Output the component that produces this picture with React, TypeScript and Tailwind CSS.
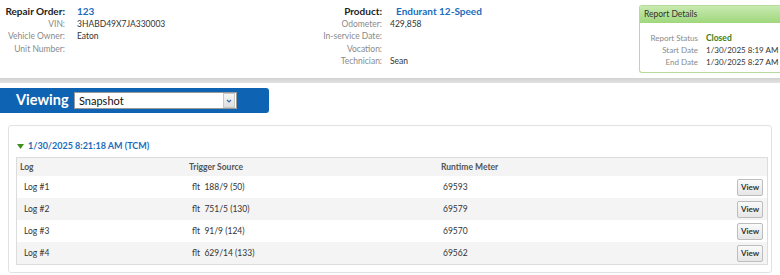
import { ReactNode } from "react";

// 一覧データ
const logs = [
  { log: "Log #1", trigger: "188/9 (50)", meter: "69593" },
  { log: "Log #2", trigger: "751/5 (130)", meter: "69579" },
  { log: "Log #3", trigger: "91/9 (124)", meter: "69570" },
  { log: "Log #4", trigger: "629/14 (133)", meter: "69562" },
];

const Label = ({ children }: { children?: ReactNode }) => (
  <div className="flex justify-end whitespace-nowrap text-[#8a8a8a]">
    <span>{children}</span>
  </div>
);

const Value = ({ children }: { children?: ReactNode }) => (
  <div className="whitespace-nowrap text-[#333]">{children}</div>
);

const App = () => {
  return (
    <div
      className="w-[780px] h-[275px] overflow-hidden bg-white text-[8.5px] leading-[12.5px]"
      style={{ fontFamily: 'Lato, "Open Sans", sans-serif' }}
    >
      {/* ヘッダー */}
      <div className="flex h-[78px]">
        {/* 左ブロック */}
        <div className="grid grid-cols-[54px_auto] gap-x-[12px] pl-[11px] pt-[5px] w-[300px] content-start">
          <div className="flex justify-end whitespace-nowrap text-[10px] font-bold text-[#222]">
            <span>Repair Order:</span>
          </div>
          <div className="text-[10px] font-bold text-[#1c6cbb]">123</div>
          <Label>VIN:</Label>
          <Value>3HABD49X7JA330003</Value>
          <Label>Vehicle Owner:</Label>
          <Value>Eaton</Value>
          <Label>Unit Number:</Label>
          <Value></Value>
        </div>
        {/* 中ブロック */}
        <div className="grid grid-cols-[82px_auto] gap-x-[8px] pt-[5px] w-[339px] content-start">
          <div className="flex justify-end whitespace-nowrap text-[10px] font-bold text-[#222]">
            <span>Product:</span>
          </div>
          <div className="pl-[6px] whitespace-nowrap text-[10px] font-bold text-[#1c6cbb]">Endurant 12-Speed</div>
          <Label>Odometer:</Label>
          <Value>429,858</Value>
          <Label>In-service Date:</Label>
          <Value></Value>
          <Label>Vocation:</Label>
          <Value></Value>
          <Label>Technician:</Label>
          <Value>Sean</Value>
        </div>
        {/* レポート詳細 */}
        <div className="flex-1 mt-[5px] h-[68px] border border-r-0 border-[#b5dc9c] rounded-l-[3px] overflow-hidden">
          <div className="h-[17px] flex items-center pl-[4px] bg-gradient-to-b from-[#c8eab0] to-[#9fd77c] text-[8.5px] text-[#333]">
            Report Details
          </div>
          <div className="grid grid-cols-[58px_auto] gap-x-[8px] pt-[9px] leading-[12px] text-[8px]">
            <Label>Report Status</Label>
            <div className="font-bold text-[8.5px] text-[#3c7d12]">Closed</div>
            <Label>Start Date</Label>
            <Value>1/30/2025 8:19 AM</Value>
            <Label>End Date</Label>
            <Value>1/30/2025 8:27 AM</Value>
          </div>
        </div>
      </div>

      {/* 区切り */}
      <div className="h-[5px] bg-gradient-to-b from-[#d2d2d2] to-[#e2e2e2]" />

      {/* 表示切替バー */}
      <div className="mt-[5px] h-[25px] w-[269px] rounded-r-[3px] bg-[#0f63b3] flex items-center pl-[16px]">
        <span className="w-[58px] text-[14.5px] font-bold text-white leading-none">Viewing</span>
        <div className="h-[17px] w-[163px] bg-white border border-[#9a9a9a] flex items-center">
          <span className="pl-[4px] text-[11px] text-[#111] flex-1 leading-none">Snapshot</span>
          <div className="h-[15px] w-[12px] mr-[1px] bg-gradient-to-b from-[#f6f6f6] to-[#dedede] border border-[#c8c8c8] flex items-center justify-center">
            <svg width="6" height="4" viewBox="0 0 6 4">
              <path d="M1 1 L3 3 L5 1" stroke="#3a6fb0" strokeWidth="1.2" fill="none" />
            </svg>
          </div>
        </div>
      </div>

      {/* スナップショット一覧 */}
      <div className="mt-[12px] mx-[8px] h-[148px] border border-[#e2e2e2] rounded-[3px] pl-[7px] pr-[3px] pt-[14px]">
        <div className="flex items-center h-[12px] pl-[1px] mb-[5px]">
          <svg width="7" height="5" viewBox="0 0 7 5" className="mr-[4px]">
            <path d="M0 0 L7 0 L3.5 5 Z" fill="#3f8f1c" />
          </svg>
          <span className="text-[9px] font-bold text-[#1c6cbb]">1/30/2025 8:21:18 AM (TCM)</span>
        </div>
        <div className="border border-[#dcdcdc] text-[8.5px]">
          <div className="grid grid-cols-[169px_252px_1fr_30px] h-[18px] items-center bg-[#f4f4f4] font-bold text-[#555]">
            <div className="pl-[3px]">Log</div>
            <div className="pl-[3px]">Trigger Source</div>
            <div className="pl-[3px]">Runtime Meter</div>
            <div></div>
          </div>
          {logs.map((row, i) => (
            <div
              key={row.log}
              className={`grid grid-cols-[169px_252px_1fr_30px] h-[22px] items-center text-[#333] ${
                i % 2 === 1 ? "bg-[#f4f4f4]" : "bg-white"
              }`}
            >
              <div className="pl-[7px]">{row.log}</div>
              <div className="pl-[6px]">flt&nbsp;&nbsp;{row.trigger}</div>
              <div className="pl-[5px]">{row.meter}</div>
              <div>
                <button className="h-[17px] w-[26px] border border-[#bdbdbd] rounded-[2px] bg-gradient-to-b from-[#fafafa] to-[#e6e6e6] text-[8px] font-bold text-[#333] leading-none">
                  View
                </button>
              </div>
            </div>
          ))}
        </div>
      </div>
    </div>
  );
};

export default App;
